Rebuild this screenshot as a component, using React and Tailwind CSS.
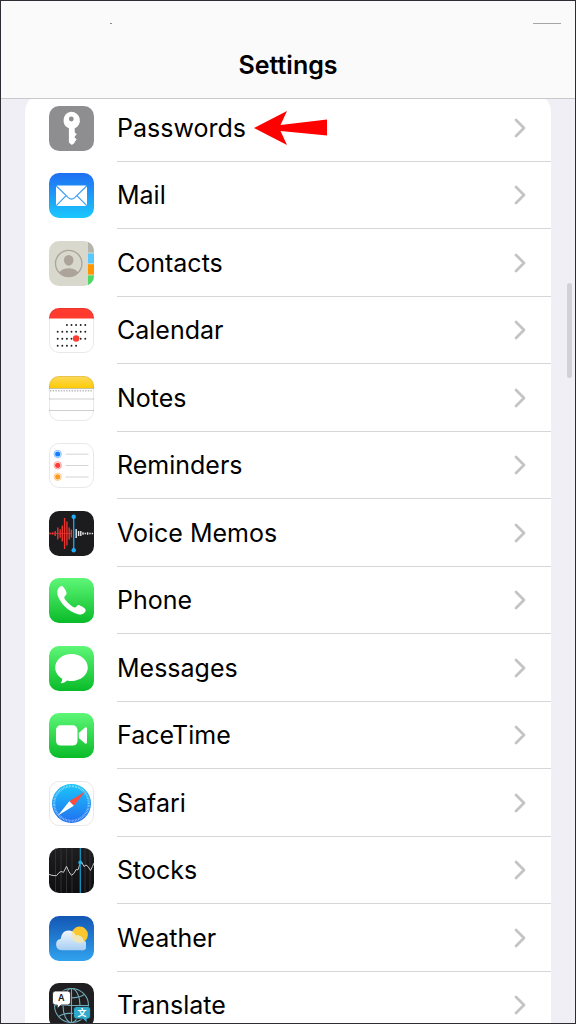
import { useId } from "react";

const Tile = ({ from, to, outline, children }) => {
  const id = useId();
  return (
    <svg viewBox="0 0 45 45" className="size-[45px] shrink-0" aria-hidden="true">
      <defs>
        <linearGradient id={`${id}-bg`} x1="0" y1="0" x2="0" y2="1">
          <stop offset="0" stopColor={from} />
          <stop offset="1" stopColor={to || from} />
        </linearGradient>
        <clipPath id={`${id}-clip`}>
          <rect width="45" height="45" rx="10" />
        </clipPath>
      </defs>
      <g clipPath={`url(#${id}-clip)`}>
        <rect width="45" height="45" fill={`url(#${id}-bg)`} />
        {children}
      </g>
      {outline && <rect x="0.5" y="0.5" width="44" height="44" rx="9.5" fill="none" stroke="#000" strokeOpacity="0.09" />}
    </svg>
  );
};

const PasswordsIcon = () => (
  <Tile from="#8e8e90">
    <path
      fill="#fff"
      fillRule="evenodd"
      d="M22.3 5.8a8.6 8.6 0 0 1 3.4 16.5v3.9l2 2-2 2.3v1l2 2.1-2 2.1v1.1l-2.8 2.2-3-2.6V22.3A8.6 8.6 0 0 1 22.3 5.8zM22.3 10.6a2.4 2.4 0 1 0 0 4.8 2.4 2.4 0 0 0 0-4.8z"
    />
  </Tile>
);

const MailIcon = () => (
  <Tile from="#1e6ff2" to="#1bc8fd">
    <rect x="7" y="12.5" width="31" height="20.5" rx="1.5" fill="#fff" />
    <path
      d="M7.3 13l12 11.6c2 1.8 4.4 1.8 6.4 0L37.7 13M7.3 32.6l9.8-10M37.7 32.6l-9.8-10"
      fill="none"
      stroke="#3b9df7"
      strokeWidth="1.2"
    />
  </Tile>
);

const ContactsIcon = () => (
  <Tile from="#d8d8cd">
    <rect x="39" width="6" height="12" fill="#b5b5ad" />
    <rect x="39" y="12" width="6" height="11" fill="#5ac8fa" />
    <rect x="39" y="23" width="6" height="11" fill="#ff9500" />
    <rect x="39" y="34" width="6" height="11" fill="#4cd964" />
    <path d="M39 12h6M39 22.8h6M39 34h6" stroke="#e5e5da" strokeWidth="0.8" />
    <circle cx="19.7" cy="22.5" r="13.2" fill="none" stroke="#aca39b" strokeWidth="1.3" />
    <ellipse cx="19.7" cy="19.3" rx="4.8" ry="5.4" fill="#aca39b" />
    <path d="M10 31.5c2.6-3 6-4.3 9.7-4.3s7.1 1.3 9.7 4.3a13.2 13.2 0 0 1-19.4 0z" fill="#aca39b" />
  </Tile>
);

const calendarDots = [
  { y: 17, from: 2, to: 6 },
  { y: 23.7, from: 0, to: 6 },
  { y: 30.7, from: 0, to: 6 },
  { y: 37.7, from: 0, to: 4 },
];

const CalendarIcon = () => (
  <Tile from="#ffffff" outline>
    <rect width="45" height="10.5" fill="#ff3b30" />
    {calendarDots.map((line) =>
      [0, 1, 2, 3, 4, 5, 6]
        .filter((n) => n >= line.from && n <= line.to)
        .map((n) => <circle key={`${line.y}-${n}`} cx={8.7 + n * 4.6} cy={line.y} r="0.95" fill="#1c1c1e" />)
    )}
    <circle cx="27.1" cy="30.5" r="3.2" fill="#ff3b30" />
  </Tile>
);

const NotesIcon = () => {
  const id = useId();
  return (
    <Tile from="#ffffff" outline>
      <defs>
        <linearGradient id={id} x1="0" y1="0" x2="0" y2="1">
          <stop offset="0" stopColor="#fcd95b" />
          <stop offset="1" stopColor="#fecb07" />
        </linearGradient>
      </defs>
      <rect width="45" height="12" fill={`url(#${id})`} />
      <path d="M0 12.5h45" stroke="#c4b991" strokeWidth="0.9" />
      <path d="M1 14.7h43" stroke="#b9b9bb" strokeWidth="1.4" strokeDasharray="1.4 1.3" />
      <path d="M0 23h45M0 34.5h45" stroke="#cfcfd1" strokeWidth="1" />
    </Tile>
  );
};

const reminders = [
  { y: 11, color: "#147efb" },
  { y: 22.3, color: "#fc3d39" },
  { y: 33.8, color: "#fd9a1c" },
];

const RemindersIcon = () => (
  <Tile from="#ffffff" outline>
    {reminders.map((item) => (
      <g key={item.y}>
        <circle cx="8.7" cy={item.y} r="3.7" fill="none" stroke={item.color} strokeOpacity="0.55" strokeWidth="0.9" />
        <circle cx="8.7" cy={item.y} r="2.6" fill={item.color} />
        <path d={`M16.5 ${item.y + 0.2}h23`} stroke="#d4d4d6" strokeWidth="1" />
      </g>
    ))}
  </Tile>
);

const redBars = [
  [1, 1], [3.6, 1.2], [6.2, 2.5], [8.8, 6], [11.2, 4.2],
  [13.3, 8], [15.6, 15.5], [17.9, 12], [20.2, 6], [22.4, 4],
];
const whiteBars = [
  [27.2, 4.5], [29.6, 2.5], [31.8, 2.5], [34, 1.2],
  [36.3, 0.7], [38.6, 1.2], [41, 0.8], [43.4, 0.7],
];

const VoiceMemosIcon = () => (
  <Tile from="#1c1c1e">
    <path d="M0 22.5h23" stroke="#e8352e" strokeWidth="0.7" />
    {redBars.map(([x, h]) => (
      <path key={x} d={`M${x} ${22.5 - h}v${h * 2}`} stroke="#e8352e" strokeWidth="1.4" />
    ))}
    {whiteBars.map(([x, h]) => (
      <path key={x} d={`M${x} ${22.5 - h}v${h * 2}`} stroke="#e8e8ea" strokeWidth="1.4" />
    ))}
    <path d="M24.7 6v34" stroke="#169fee" strokeWidth="1.4" />
    <circle cx="24.7" cy="5.7" r="2.2" fill="#20adf8" />
    <circle cx="24.7" cy="39.3" r="2.2" fill="#20adf8" />
  </Tile>
);

const PhoneIcon = () => (
  <Tile from="#5ef777" to="#09bb28">
    <path
      fill="#fff"
      d="M8.9 11.2C10 9 12 7.5 13.5 8.3c1.3.7 3.6 4.7 4.1 6.4.4 1.4-1.6 3-2.2 4-.5 1 .4 2.5 1.7 4 2 2.4 4.3 4.5 6.7 6 1.5 1 2.7.9 3.7-.2 1-1.2 1.7-1.7 3-1.2 1.5.6 4.5 2.4 5.7 3.6 1.1 1.2.2 2.7-.8 3.8-1.3 1.3-3.6 2.2-6.3 1.6-4.7-1-9.7-4.3-13.5-8-3.2-3.2-6-7.5-7-11-.5-2-.4-4.5.3-6.1z"
    />
  </Tile>
);

const MessagesIcon = () => (
  <Tile from="#5ef777" to="#09bb28">
    <path
      fill="#fff"
      d="M22.5 8C13.4 8 6.2 13.9 6.2 21.5c0 4.8 2.8 8.8 7 11.2.2 1.8-.7 3.3-1.8 4.5 3.1-.1 5.2-1.2 6.6-2.8 1.5.4 3 .5 4.5.5 9.1 0 16.3-5.9 16.3-13.4S31.6 8 22.5 8z"
    />
  </Tile>
);

const FaceTimeIcon = () => (
  <Tile from="#5ef777" to="#09bb28">
    <rect x="7" y="12.3" width="21.5" height="20.3" rx="4.7" fill="#fff" />
    <path fill="#fff" d="M29.8 20l6.3-5.4c.8-.7 1.9-.4 1.9.8v14.2c0 1.2-1.1 1.5-1.9.8L29.8 25z" />
  </Tile>
);

const SafariIcon = () => {
  const id = useId();
  return (
    <Tile from="#ffffff" outline>
      <defs>
        <linearGradient id={id} x1="0" y1="0" x2="0" y2="1">
          <stop offset="0" stopColor="#1bc6f9" />
          <stop offset="1" stopColor="#226ff1" />
        </linearGradient>
      </defs>
      <circle cx="22.5" cy="22.5" r="19.5" fill={`url(#${id})`} />
      <circle cx="22.5" cy="22.5" r="17.3" fill="none" stroke="#fff" strokeOpacity="0.65" strokeWidth="2.2" strokeDasharray="0.6 0.91" />
      <path fill="#ff4b3e" d="M36 10.8L20.3 20.2l4.5 4.6z" />
      <path fill="#fff" d="M9 34.5l11.3-14.3 4.5 4.6z" />
    </Tile>
  );
};

const StocksIcon = () => (
  <Tile from="#1e1e20" to="#0e0e10">
    <path d="M6.5 0v45M12 0v45M17.5 0v45M23 0v45M36 0v45M41 0v45" stroke="#343436" strokeWidth="0.9" />
    <path
      d="M0 26.5l4 1 3.5.2 2.5-3 2-1.2 2.5.8 3-6 2.5 5.5 2.5 3.5 2.5-2 2-3.7 2 .2 2-6 1.5-1.8 2.5 4.5 2-1.5 2 1.5 2.5 4 2-4 1.5-3.5 2-1.5"
      fill="none"
      stroke="#c9c9cb"
      strokeWidth="1"
      strokeLinejoin="round"
    />
    <path d="M31.3 0v45" stroke="#1496c2" strokeWidth="1.3" />
    <circle cx="31.3" cy="14.5" r="2" fill="#1fb5e6" />
  </Tile>
);

const WeatherIcon = () => {
  const id = useId();
  return (
    <Tile from="#1357b4" to="#31a2ee">
      <defs>
        <linearGradient id={`${id}-cloud`} x1="0" y1="0" x2="0" y2="1">
          <stop offset="0" stopColor="#f4f8fd" />
          <stop offset="1" stopColor="#a3cdf2" />
        </linearGradient>
        <clipPath id={`${id}-shape`}>
          <path d="M12.5 34.3a5.8 5.8 0 0 1-.6-11.5c.2-5 3.4-8.3 7.5-8.3 3.5 0 6 1.8 7.2 5.1 4.5-.9 7.6 1.7 7.7 4.9a4.9 4.9 0 0 1-2.3 9.8z" />
        </clipPath>
      </defs>
      <circle cx="30.7" cy="18.7" r="8.2" fill="#fcc62f" />
      <g clipPath={`url(#${id}-shape)`}>
        <rect x="5" y="14" width="32" height="21" fill={`url(#${id}-cloud)`} />
        <circle cx="30.7" cy="18.7" r="8.2" fill="#f3e7b0" fillOpacity="0.9" />
      </g>
    </Tile>
  );
};

const TranslateIcon = () => (
  <Tile from="#1f1f21">
    <g fill="none" stroke="#6fa9b5" strokeWidth="1.1">
      <circle cx="22.5" cy="22.5" r="17" />
      <ellipse cx="22.5" cy="22.5" rx="8.5" ry="17" />
      <path d="M22.5 5.5v34M5.5 22.5h34M9.5 11.5c7.5 4.5 18.5 4.5 26 0M9.5 33.5c7.5-4.5 18.5-4.5 26 0" />
    </g>
    <path
      fill="#fff"
      stroke="#1f1f21"
      strokeWidth="0.8"
      d="M6.5 8h12a3 3 0 0 1 3 3v8a3 3 0 0 1-3 3h-6.5l-3.7 3.5V22h-1.8a3 3 0 0 1-3-3v-8a3 3 0 0 1 3-3z"
    />
    <path
      fill="#30aacb"
      stroke="#1f1f21"
      strokeWidth="0.8"
      d="M27.5 23.5h11a3 3 0 0 1 3 3v6.5a3 3 0 0 1-3 3h-.5v4l-4-4h-6.5a3 3 0 0 1-3-3v-6.5a3 3 0 0 1 3-3z"
    />
    <text x="12.3" y="18" textAnchor="middle" fontSize="9" fontWeight="600" fontFamily="Inter, sans-serif" fill="#1c1c1e">A</text>
    <text x="33" y="33" textAnchor="middle" fontSize="9" fontWeight="700" fontFamily="'Noto Sans CJK SC', sans-serif" fill="#fff">文</text>
  </Tile>
);

const items = [
  { name: "Passwords", Icon: PasswordsIcon, marked: true },
  { name: "Mail", Icon: MailIcon },
  { name: "Contacts", Icon: ContactsIcon },
  { name: "Calendar", Icon: CalendarIcon },
  { name: "Notes", Icon: NotesIcon },
  { name: "Reminders", Icon: RemindersIcon },
  { name: "Voice Memos", Icon: VoiceMemosIcon },
  { name: "Phone", Icon: PhoneIcon },
  { name: "Messages", Icon: MessagesIcon },
  { name: "FaceTime", Icon: FaceTimeIcon },
  { name: "Safari", Icon: SafariIcon },
  { name: "Stocks", Icon: StocksIcon },
  { name: "Weather", Icon: WeatherIcon },
  { name: "Translate", Icon: TranslateIcon },
];

const Arrow = () => (
  <svg viewBox="0 0 73 34" className="ml-2 h-[34px] w-[73px] shrink-0" aria-hidden="true">
    <path d="M0 17L33 0l-6.5 14L73 8.5v16L26.5 20 33 34z" fill="#ff0000" />
  </svg>
);

const Chevron = () => (
  <svg viewBox="0 0 12 20" className="ml-auto h-5 w-3 shrink-0" aria-hidden="true">
    <path d="M2 2l8 8-8 8" fill="none" stroke="#c4c4c6" strokeWidth="2.8" strokeLinecap="round" strokeLinejoin="round" />
  </svg>
);

const App = () => {
  return (
    <div className="relative flex h-screen flex-col overflow-hidden border border-[#2e2d33] bg-[#f0eff5] font-['Inter',sans-serif] text-black">
      <header className="z-10 shrink-0 border-b border-[#c8c8ca] bg-[#fafafb]">
        {/* what is left of the status bar */}
        <div className="flex h-[23px] items-end justify-between pr-[14px] pl-[109px]">
          <span className="h-px w-0.5 bg-[#8a8a8c]" />
          <span className="h-px w-7 bg-[#a5a5a7]" />
        </div>
        <h1 className="flex h-[74px] items-center justify-center pt-2 text-[25px] leading-8 font-semibold">
          Settings
        </h1>
      </header>

      <main className="-mt-[5px] px-6">
        <ul className="overflow-hidden rounded-[18px] bg-white">
          {items.map(({ name, Icon, marked }) => (
            <li key={name} className="h-[68px] even:h-[67px]">
              <a href="#" className="flex h-full items-center pl-6">
                <Icon />
                <span className="ml-[23px] flex h-full flex-1 items-center border-b border-[#d6d6d8] pr-[25px]">
                  <span className="text-[25px] leading-8">{name}</span>
                  {marked && <Arrow />}
                  <Chevron />
                </span>
              </a>
            </li>
          ))}
        </ul>
      </main>

      {/* scroll indicator */}
      <div className="absolute top-[282px] right-[3px] h-[95px] w-[5px] rounded-full bg-[#d2d2d5]" />
    </div>
  );
};

export default App;
